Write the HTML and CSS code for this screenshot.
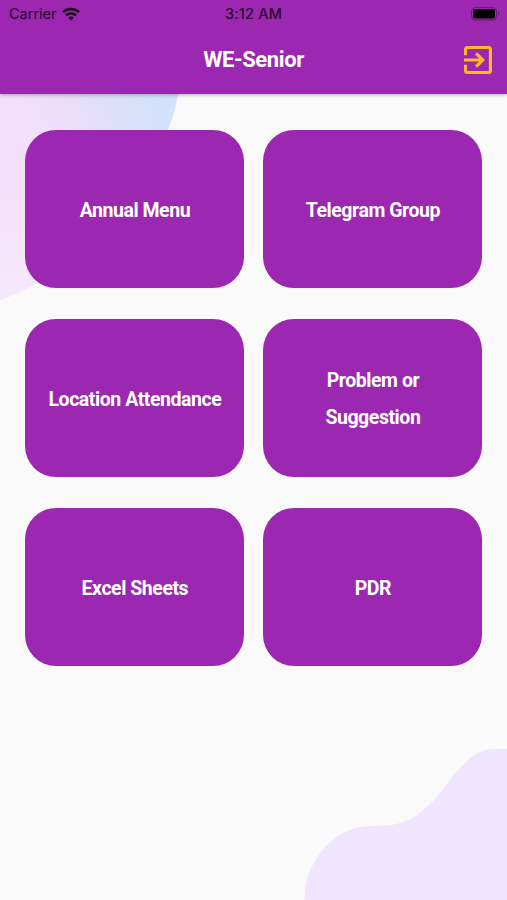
FILE: index.html
```
<!DOCTYPE html>
<html lang="en">
<head>
  <meta charset="UTF-8" />
  <meta name="viewport" content="width=device-width, initial-scale=1.0"/>
  <title>WE-Senior</title>
  <link rel="stylesheet" href="styles.css">
</head>
<body>

  <svg class="background" viewBox="0 0 507 900" aria-hidden="true">
    <defs>
      <linearGradient id="blobTop" gradientUnits="userSpaceOnUse" x1="40" y1="160" x2="170" y2="105">
        <stop offset="0" stop-color="#f4dffa"/>
        <stop offset="0.5" stop-color="#e3defa"/>
        <stop offset="1" stop-color="#d0e3fb"/>
      </linearGradient>
      <linearGradient id="blobFade" x1="0" y1="0" x2="0" y2="1">
        <stop offset="0.4" stop-color="#f5e8fc" stop-opacity="0"/>
        <stop offset="1" stop-color="#f5e8fc"/>
      </linearGradient>
    </defs>
    <path d="M0 80H180C177 105 174 115 168 130C145 190 85 270 35 284Q18 294 0 300Z" fill="url(#blobTop)"/>
    <path d="M0 80H180C177 105 174 115 168 130C145 190 85 270 35 284Q18 294 0 300Z" fill="url(#blobFade)"/>
    <path d="M304.500 900C304 862 334 826 371 826C397 826 409 823 428 806C449 787 464 749 495 749H507V900Z" fill="#f0e5fe"/>
  </svg>

  <header>
    <div class="status-bar">
      <div class="carrier">
        <span>Carrier</span>
        <svg class="wifi" viewBox="0 0 18 14">
          <g fill="none" stroke="#130516" stroke-width="2.500">
            <path d="M1 5.200C5.500 .8 12.500 .8 17 5.200"/>
            <path d="M4 8.400C6.900 5.700 11.100 5.700 14 8.400"/>
          </g>
          <path d="M9 13.500L6.200 10.700Q9 8.500 11.800 10.700Z" fill="#130516"/>
        </svg>
      </div>
      <span class="time">3:12 AM</span>
      <svg class="battery" viewBox="0 0 29 14">
        <rect x=".5" y=".5" width="25" height="12.500" rx="3.500" fill="none" stroke="#65197a"/>
        <rect x="2" y="2" width="22" height="9.500" rx="1.800" fill="#000"/>
        <path d="M27 4.500Q29 6.700 27 9Z" fill="#65197a"/>
      </svg>
    </div>
    <div class="app-bar">
      <h1>WE-Senior</h1>
      <button class="logout" aria-label="Log out">
        <svg viewBox="3 3 18 18">
          <path fill="#ffb72b" d="M10.090 15.590L11.500 17l5-5-5-5-1.410 1.410L12.670 11H3v2h9.670l-2.580 2.590zM19 3H5c-1.110 0-2 .9-2 2v4h2V5h14v14H5v-4H3v4c0 1.100.89 2 2 2h14c1.100 0 2-.9 2-2V5c0-1.100-.9-2-2-2z"/>
        </svg>
      </button>
    </div>
  </header>

  <main class="menu">
    <button class="card">Annual Menu</button>
    <button class="card">Telegram Group</button>
    <button class="card">Location Attendance</button>
    <button class="card">Problem or<br>Suggestion</button>
    <button class="card">Excel Sheets</button>
    <button class="card">PDR</button>
  </main>

</body>
</html>
```

FILE: styles.css
```
* {
  box-sizing: border-box;
}

body {
  margin: 0;
  height: 900px;
  position: relative;
  overflow: hidden;
  background-color: #fafafa;
  font-family: Roboto, sans-serif;
}

.background {
  position: absolute;
  top: 0;
  left: 0;
  width: 507px;
  height: 900px;
  z-index: -1;
}

header {
  height: 94px;
  background-color: #9c27b0;
  box-shadow: 0 1px 4px rgba(0, 0, 0, 0.3);
}

.status-bar {
  display: grid;
  grid-template-columns: 1fr auto 1fr;
  align-items: center;
  height: 27px;
  padding: 0 7px 0 9px;
  font-family: Inter, sans-serif;
  font-size: 14.5px;
  color: #27072d;
}

.carrier {
  display: flex;
  align-items: center;
  gap: 5px;
}

.wifi {
  width: 18px;
  height: 14px;
}

.time {
  padding-right: 2px;
  font-weight: 500;
  letter-spacing: 0.2px;
}

.battery {
  width: 29px;
  height: 14px;
  justify-self: end;
}

.app-bar {
  display: grid;
  grid-template-columns: 1fr auto 1fr;
  align-items: center;
  height: 65px;
  padding: 0 15px;
}

h1 {
  grid-column: 2;
  margin: 0;
  font-size: 22px;
  font-weight: 700;
  letter-spacing: -0.4px;
  color: #fff;
}

button {
  border: none;
  padding: 0;
  cursor: pointer;
}

.logout {
  justify-self: end;
  width: 28px;
  height: 28px;
  background: none;
}

.logout svg {
  display: block;
}

.menu {
  display: grid;
  grid-template-columns: 219px 219px;
  grid-auto-rows: 158px;
  gap: 31px 19px;
  padding: 36.4px 25.4px;
}

.card {
  padding-top: 2px;
  border-radius: 31px;
  background-color: #9c27b0;
  color: #fff;
  font-family: inherit;
  font-size: 19.5px;
  font-weight: 700;
  letter-spacing: -0.45px;
  line-height: 37px;
}
```
